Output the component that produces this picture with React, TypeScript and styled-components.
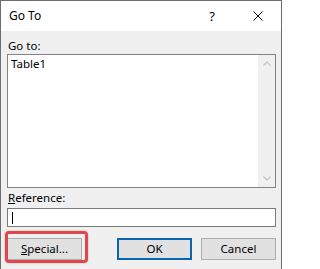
import React from 'react';
import styled, { createGlobalStyle } from 'styled-components';

const GlobalStyle = createGlobalStyle`
	html, body {
		margin: 0;
		padding: 0;
		background: #ffffff;
	}
	body {
		font-family: 'Noto Sans', 'Open Sans', 'Liberation Sans', sans-serif;
		font-size: 11.5px;
		color: #000000;
	}
`;

export default function App() {
	return (
		<>
			<GlobalStyle />
			<Window>
				<TitleBar>
					<Title>Go To</Title>
					<CaptionButtons>
						<CaptionButton>?</CaptionButton>
						<CaptionButton aria-label="Close">
							<svg width="10" height="10" viewBox="0 0 10 10">
								<path d="M0.5 0.5 L9.5 9.5 M9.5 0.5 L0.5 9.5" stroke="#000" strokeWidth="1" fill="none" />
							</svg>
						</CaptionButton>
					</CaptionButtons>
				</TitleBar>
				<Content>
					<FieldLabel>Go to:</FieldLabel>
					<ListBox>
						<ListItems>
							<ListItem>Table1</ListItem>
						</ListItems>
						<ScrollBar>
							<ScrollArrow>
								<svg width="8" height="5" viewBox="0 0 8 5">
									<path d="M0.5 4.5 L4 1 L7.5 4.5" stroke="#c2c2c2" strokeWidth="1.2" fill="none" />
								</svg>
							</ScrollArrow>
							<ScrollArrow>
								<svg width="8" height="5" viewBox="0 0 8 5">
									<path d="M0.5 0.5 L4 4 L7.5 0.5" stroke="#c2c2c2" strokeWidth="1.2" fill="none" />
								</svg>
							</ScrollArrow>
						</ScrollBar>
					</ListBox>
					<FieldLabel $spaced>
						<u>R</u>eference:
					</FieldLabel>
					<TextInput>
						<Caret />
					</TextInput>
					<ButtonRow>
						<Highlighted>
							<DialogButton>
								<u>S</u>pecial...
							</DialogButton>
						</Highlighted>
						<ButtonGroup>
							<DialogButton $primary>OK</DialogButton>
							<DialogButton>Cancel</DialogButton>
						</ButtonGroup>
					</ButtonRow>
				</Content>
			</Window>
		</>
	);
}

const Window = styled.div`
	width: 282px;
	height: 275px;
	box-sizing: border-box;
	border: 1px solid #6e6e6e;
	background: #f0f0f0;
	display: flex;
	flex-direction: column;
`;

const TitleBar = styled.div`
	height: 30px;
	background: #ffffff;
	display: flex;
	align-items: center;
	justify-content: space-between;
`;

const Title = styled.div`
	padding-left: 8px;
	line-height: 16px;
	font-size: 12px;
`;

const CaptionButtons = styled.div`
	display: flex;
	height: 100%;
`;

const CaptionButton = styled.div`
	width: 46px;
	height: 100%;
	display: flex;
	align-items: center;
	justify-content: center;
	font-size: 13px;
`;

const Content = styled.div`
	padding: 7px 5px 0 6px;
	display: flex;
	flex-direction: column;
`;

const FieldLabel = styled.div<{ $spaced?: boolean }>`
	line-height: 16px;
	margin-top: ${p => (p.$spaced ? '2px' : '0')};
	margin-bottom: ${p => (p.$spaced ? '2px' : '0')};
	padding-left: 1px;
`;

const ListBox = styled.div`
	height: 134px;
	box-sizing: border-box;
	border: 1px solid #828282;
	background: #ffffff;
	display: flex;
`;

const ListItems = styled.div`
	flex: 1;
	padding: 1px 3px;
`;

const ListItem = styled.div`
	line-height: 16px;
`;

const ScrollBar = styled.div`
	width: 17px;
	background: #f0f0f0;
	display: flex;
	flex-direction: column;
	justify-content: space-between;
`;

const ScrollArrow = styled.div`
	height: 17px;
	display: flex;
	align-items: center;
	justify-content: center;
`;

const TextInput = styled.div`
	height: 19px;
	box-sizing: border-box;
	border: 1px solid #7a7a7a;
	background: #ffffff;
	display: flex;
	align-items: center;
	padding-left: 4px;
`;

const Caret = styled.div`
	width: 1px;
	height: 12px;
	background: #000000;
`;

const ButtonRow = styled.div`
	margin-top: 11px;
	display: flex;
	justify-content: space-between;
`;

const ButtonGroup = styled.div`
	display: flex;
	gap: 9px;
`;

const Highlighted = styled.div`
	position: relative;

	&::after {
		content: '';
		position: absolute;
		top: -7px;
		left: -2px;
		right: -6px;
		bottom: -3px;
		border: 3px solid #e0474d;
		border-radius: 4px;
		box-shadow: 0 0 2px rgba(0, 0, 0, 0.3);
		pointer-events: none;
	}
`;

const DialogButton = styled.div<{ $primary?: boolean }>`
	width: 75px;
	height: 22px;
	box-sizing: border-box;
	border: ${p => (p.$primary ? '2px solid #0a64b4' : '1px solid #adadad')};
	background: #e1e1e1;
	display: flex;
	align-items: center;
	justify-content: center;
	line-height: 16px;
`;
